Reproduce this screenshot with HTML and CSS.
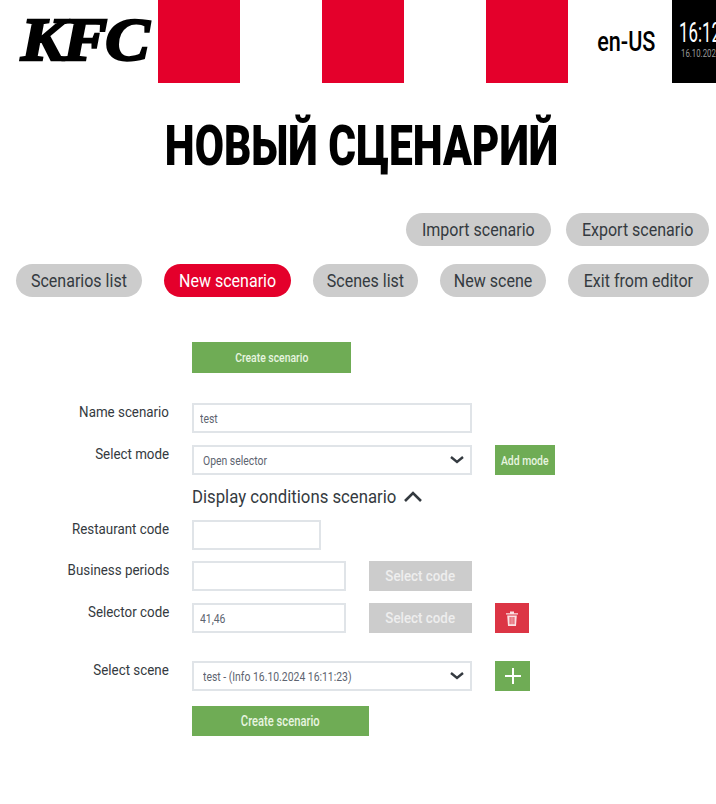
FILE: index.html
```html
<!DOCTYPE html>
<html lang="en">
<head>
    <meta charset="UTF-8">
    <meta name="viewport" content="width=device-width, initial-scale=1.0">
    <title>New scenario</title>
    <link rel="stylesheet" href="styles.css">
</head>
<body>
    <header class="top-bar">
        <div class="logo"><span class="logo-text">KFC</span></div>
        <div class="stripes">
            <div class="stripe red"></div>
            <div class="stripe"></div>
            <div class="stripe red"></div>
            <div class="stripe"></div>
            <div class="stripe red"></div>
        </div>
        <div class="lang"><span class="lang-text">en-US</span></div>
        <div class="clock">
            <div class="clock-time">16:12</div>
            <div class="clock-date">16.10.2024</div>
        </div>
    </header>

    <h1 class="page-title"><span class="page-title-text">НОВЫЙ СЦЕНАРИЙ</span></h1>

    <div class="actions actions-right">
        <button class="pill"><span class="narrow">Import scenario</span></button>
        <button class="pill"><span class="narrow">Export scenario</span></button>
    </div>
    <nav class="actions actions-nav">
        <button class="pill"><span class="narrow">Scenarios list</span></button>
        <button class="pill active"><span class="narrow">New scenario</span></button>
        <button class="pill"><span class="narrow">Scenes list</span></button>
        <button class="pill"><span class="narrow">New scene</span></button>
        <button class="pill"><span class="narrow">Exit from editor</span></button>
    </nav>

    <form class="scenario-form">
        <div class="row row-submit">
            <button type="button" class="btn-green btn-top"><span class="narrower">Create scenario</span></button>
        </div>

        <div class="row row-name">
            <label class="field-label"><span class="narrow">Name scenario</span></label>
            <div class="field field-wide"><span class="narrower">test</span></div>
        </div>
        <div class="row row-mode">
            <label class="field-label"><span class="narrow">Select mode</span></label>
            <div class="field field-wide field-select">
                <span class="narrower">Open selector</span>
                <svg class="select-arrow" width="16" height="10" viewBox="0 0 16 10"><path d="M2 2l6 5 6-5" fill="none" stroke="#343a40" stroke-width="2.4"/></svg>
            </div>
            <button type="button" class="btn-green btn-add"><span class="narrower">Add mode</span></button>
        </div>
        <div class="conditions">
            <span class="narrow">Display conditions scenario</span>
            <svg class="conditions-arrow" width="20" height="12" viewBox="0 0 20 12"><path d="M2 11l8-8 8 8" fill="none" stroke="#343a40" stroke-width="2.6"/></svg>
        </div>
        <div class="row row-restaurant">
            <label class="field-label"><span class="narrow">Restaurant code</span></label>
            <div class="field field-short"></div>
        </div>
        <div class="row row-business">
            <label class="field-label"><span class="narrow">Business periods</span></label>
            <div class="field field-mid"></div>
            <button type="button" class="btn-grey"><span class="narrow">Select code</span></button>
        </div>
        <div class="row row-selector">
            <label class="field-label"><span class="narrow">Selector code</span></label>
            <div class="field field-mid"><span class="narrower">41,46</span></div>
            <button type="button" class="btn-grey"><span class="narrow">Select code</span></button>
            <button type="button" class="btn-icon btn-delete" aria-label="Delete">
                <svg width="12" height="15" viewBox="0 0 12 15"><path d="M0 2.2h12v1.3H0zM4 .4h4v1.8H4zM1.2 4.4h9.6L10 15H2zM3.6 6v7.2h1V6zM5.5 6v7.2h1V6zM7.4 6v7.2h1V6z" fill="#fff" fill-rule="evenodd" opacity=".85"/></svg>
            </button>
        </div>
        <div class="row row-scene">
            <label class="field-label"><span class="narrow">Select scene</span></label>
            <div class="field field-wide field-select">
                <span class="narrower">test - (Info 16.10.2024 16:11:23)</span>
                <svg class="select-arrow" width="16" height="10" viewBox="0 0 16 10"><path d="M2 2l6 5 6-5" fill="none" stroke="#343a40" stroke-width="2.4"/></svg>
            </div>
            <button type="button" class="btn-icon btn-plus" aria-label="Add">
                <svg width="16" height="16" viewBox="0 0 16 16"><path d="M7 0h2v7h7v2H9v7H7V9H0V7h7z" fill="#fff"/></svg>
            </button>
        </div>
        <div class="row row-create">
            <button type="button" class="btn-green btn-bottom"><span class="narrower">Create scenario</span></button>
        </div>
    </form>
</body>
</html>
```

FILE: styles.css
```css
html, body {
    margin: 0;
    padding: 0;
    overflow: hidden;
}
body {
    width: 716px;
    height: 804px;
    background: #fff;
    color: #343a40;
    font-family: Roboto, "Liberation Sans", sans-serif;
}
button {
    font-family: inherit;
    border: none;
    padding: 0;
    cursor: pointer;
}
.narrow, .narrower, .page-title-text, .lang-text, .logo-text {
    display: inline-block;
    white-space: nowrap;
}
.narrow {
    transform: scaleX(0.89);
}
.narrower {
    transform: scaleX(0.8);
    transform-origin: left center;
}
button .narrower {
    transform-origin: center;
    font-weight: 500;
}

/* top bar */
.top-bar {
    display: flex;
    height: 83px;
    overflow: hidden;
}
.logo {
    width: 158px;
    flex-shrink: 0;
    display: flex;
    align-items: center;
    padding: 0 0 5px 21px;
    box-sizing: border-box;
}
.logo-text {
    font-family: "Liberation Serif", serif;
    font-weight: bold;
    font-style: italic;
    font-size: 62px;
    color: #000;
    -webkit-text-stroke: 2.5px #000;
    letter-spacing: -2px;
    line-height: 1;
    transform: scaleX(1.07);
    transform-origin: left center;
}
.stripes {
    display: flex;
    flex-shrink: 0;
}
.stripe {
    width: 82px;
}
.stripe.red {
    background: #e4002b;
}
.lang {
    width: 104px;
    flex-shrink: 0;
    display: flex;
    justify-content: center;
    align-items: center;
    padding-left: 12px;
    box-sizing: border-box;
}
.lang-text {
    font-size: 27px;
    font-weight: 500;
    color: #000;
    transform: scaleX(0.8);
}
.clock {
    width: 80px;
    flex-shrink: 0;
    background: #000;
    color: #fff;
    padding: 19px 0 0 7px;
    box-sizing: border-box;
}
.clock-time {
    font-size: 28px;
    line-height: 28px;
    white-space: nowrap;
    transform: scaleX(0.6);
    transform-origin: left center;
}
.clock-date {
    font-size: 10px;
    line-height: 11px;
    color: #999;
    margin: 1px 0 0 2px;
    white-space: nowrap;
    transform: scaleX(0.78);
    transform-origin: left center;
}

.page-title {
    margin: 31px 0 0;
    padding-left: 8px;
    height: 64px;
    text-align: center;
    font-size: 56px;
    line-height: 64px;
    font-weight: 900;
    color: #000;
}
.page-title-text {
    transform: scaleX(0.758);
}

/* pill buttons */
.actions {
    display: flex;
}
.actions-right {
    margin-top: 35px;
    justify-content: flex-end;
    gap: 15px;
    padding-right: 7px;
}
.actions-nav {
    margin-top: 18px;
    justify-content: space-between;
    padding: 0 7px 0 16px;
}
.pill {
    height: 33px;
    padding: 0 9px;
    border-radius: 17px;
    background: #ccc;
    color: #343a40;
    font-size: 18px;
}
.pill.active {
    background: #e4002b;
    color: #fff;
}

/* form */
.scenario-form {
    margin-top: 45px;
}
.row {
    display: flex;
    align-items: flex-start;
    padding-left: 192px;
}
.field-label {
    width: 169px;
    margin-left: -192px;
    margin-right: 23px;
    flex-shrink: 0;
    text-align: right;
    font-size: 15px;
    line-height: 18px;
}
.field-label .narrow {
    transform-origin: right center;
}
.field {
    height: 30px;
    box-sizing: border-box;
    border: 2px solid #e0e4e8;
    background: #fff;
    display: flex;
    align-items: center;
    padding-left: 6px;
    font-size: 13px;
    color: #5d6470;
}
.field-wide {
    width: 280px;
}
.field-mid {
    width: 154px;
}
.field-short {
    width: 129px;
}
.field-select {
    position: relative;
    padding-left: 9px;
}
.select-arrow {
    position: absolute;
    right: 5px;
    top: 8px;
}
.btn-green {
    background: #6fac55;
    color: #e8f5e0;
}
.btn-top {
    width: 159px;
    height: 31px;
    font-size: 13px;
}
.btn-bottom {
    width: 177px;
    height: 30px;
    font-size: 14px;
}
.btn-add {
    width: 60px;
    height: 30px;
    margin-left: 23px;
    font-size: 13px;
}
.btn-grey {
    width: 103px;
    height: 30px;
    margin-left: 23px;
    background: #ccc;
    color: #eee;
    font-size: 15px;
    font-weight: 500;
}
.btn-icon {
    height: 30px;
    margin-left: 23px;
    display: flex;
    align-items: center;
    justify-content: center;
}
.btn-delete {
    width: 34px;
    background: #dc3545;
}
.btn-plus {
    width: 35px;
    background: #6fac55;
}
.conditions {
    display: flex;
    align-items: center;
    margin: 11px 0 0 192px;
    height: 20px;
    font-size: 18px;
    white-space: nowrap;
}
.conditions .narrow {
    transform: scaleX(0.93);
    transform-origin: left center;
}
.conditions-arrow {
    margin-left: -9px;
}
.row-name {
    margin-top: 30px;
}
.row-mode {
    margin-top: 12px;
}
.row-restaurant {
    margin-top: 14px;
}
.row-business {
    margin-top: 11px;
}
.row-selector {
    margin-top: 12px;
}
.row-scene {
    margin-top: 28px;
}
.row-create {
    margin-top: 15px;
}
```
